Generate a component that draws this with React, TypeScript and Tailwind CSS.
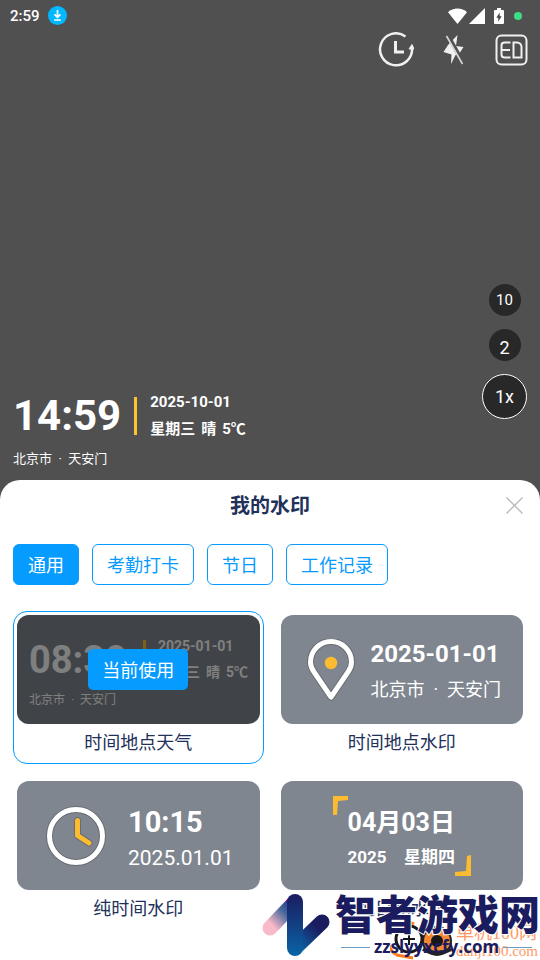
import React from 'react';
import clsx from 'clsx';

const tabs = ['通用', '考勤打卡', '节日', '工作记录'];

function StatusBar() {
    return (
        <div className="flex h-[31px] items-center px-[10px] text-white">
            <span className="text-[15px] leading-5 font-medium">2:59</span>
            <svg className="ml-2 h-[19px] w-[19px]" viewBox="0 0 19 19">
                <circle cx="9.5" cy="9.5" r="9.5" fill="#00b8ff" />
                <path d="M9.5 4v7M6.5 8.3l3 3 3-3M6.2 14h6.6" fill="none" stroke="#fff" strokeWidth="1.7" />
            </svg>
            <svg className="ml-auto h-4 w-[19px]" viewBox="0 0 19 16">
                <path d="M9.5 16 0 4.2C2.5 1.8 6 .5 9.5 .5S16.5 1.8 19 4.2z" fill="#fff" />
            </svg>
            <svg className="ml-[2px] h-4 w-4" viewBox="0 0 16 16">
                <path d="M16 0v16H0z" fill="#fff" />
            </svg>
            <svg className="ml-[9px] h-4 w-[10px]" viewBox="0 0 10 16">
                <path d="M3 0h4v2h2a1 1 0 0 1 1 1v12a1 1 0 0 1-1 1H1a1 1 0 0 1-1-1V3a1 1 0 0 1 1-1h2z" fill="#fff" />
                <path d="M5.7 4.5v3.8h2L4.3 13.5V9.7h-2z" fill="#444" />
            </svg>
            <span className="mr-2 ml-[10px] h-2 w-2 rounded-full bg-[#3ddc84]" />
        </div>
    );
}

function Toolbar() {
    return (
        <div className="flex h-[37px] items-center justify-end gap-7 px-3">
            <button aria-label="定时">
                <svg className="h-9 w-9" viewBox="0 0 36 36" fill="none" stroke="#f0f0f0" strokeWidth="2.5">
                    <path d="M27.5 4.4A16 16 0 1 0 34 16" />
                    <path d="M17.500 9v11h8.500" strokeWidth="3" />
                    <path d="m31 17 3-4.500 2 4.500z" fill="#f0f0f0" strokeWidth="1" />
                </svg>
            </button>
            <button aria-label="闪光灯">
                <svg className="h-9 w-[25px]" viewBox="0 0 25 36">
                    <path d="M15.5 3 14 14l7.500 1L17 22l-3.500 1L9 32l.500-9.500-8-2.500L6 13z" fill="#f0f0f0" />
                    <path d="M6 3.500 22 32" stroke="#505050" strokeWidth="4" />
                    <path d="M4.500 4 20.500 32" stroke="#d8d8d8" strokeWidth="1.6" />
                </svg>
            </button>
            <button aria-label="画质">
                <svg className="h-9 w-[33px]" viewBox="0 0 33 36" fill="none" stroke="#f0f0f0" strokeWidth="2">
                    <rect x="1.5" y="3.5" width="30" height="29" rx="5" />
                    <path d="M15.500 10.5H9.5a3 3 0 0 0-3 3v9a3 3 0 0 0 3 3h6M6.5 18H15" />
                    <path d="M18.5 25.5v-15H22a4.500 4.500 0 0 1 4.500 4.500v10.500z" />
                </svg>
            </button>
        </div>
    );
}

function CameraView() {
    return (
        <main className="flex flex-1 items-end justify-between px-[13px] text-white">
            <div className="pb-[11px]">
                <div className="flex items-center">
                    <span className="text-[42px] leading-[54px] font-bold">14:59</span>
                    <span className="ml-[13px] h-[38px] w-[3px] bg-[#ffc32b]" />
                    <div className="ml-[13px] text-[15px] leading-[27px] font-bold">
                        <p>2025-10-01</p>
                        <p className="flex gap-[6px]">
                            <span>星期三</span>
                            <span>晴</span>
                            <span>5℃</span>
                        </p>
                    </div>
                </div>
                <p className="mt-[6px] text-[13px] leading-5 whitespace-pre">北京市  ·  天安门</p>
            </div>
            <div className="flex flex-col items-center gap-[13px] pb-[61px]">
                <button className="h-8 w-8 rounded-full bg-[#282828] text-[15px]">10</button>
                <button className="h-8 w-8 rounded-full bg-[#282828] pt-1 text-[18px]">2</button>
                <button className="h-[45px] w-[45px] rounded-full border border-white bg-[#282828] text-[18px]">1x</button>
            </div>
        </main>
    );
}

interface CardProps {
    label: string;
    active?: boolean;
    children: React.ReactNode;
}

function TemplateCard({ label, active, children }: CardProps) {
    return (
        <button
            className={clsx(
                'flex flex-col rounded-[14px] border px-[3px] pt-[3px] pb-px',
                active ? 'border-[#069bff]' : 'border-transparent'
            )}
        >
            <div className="relative flex h-[109px] w-full items-center overflow-hidden rounded-xl bg-[#80868f] text-left text-white">
                {children}
                {active && (
                    <div className="absolute inset-0 flex items-center justify-center bg-black/50">
                        <span className="rounded-[5px] bg-[#069bff] px-[14px] pt-[2px] text-[18px] leading-[39px]">当前使用</span>
                    </div>
                )}
            </div>
            <span className="w-full text-center text-[18px] leading-[38px] text-[#22315a]">{label}</span>
        </button>
    );
}

function BrandMark() {
    return (
        <div className="pointer-events-none absolute right-0 bottom-0 flex h-[70px] w-[280px] items-start">
            <svg className="h-[70px] w-[72px] shrink-0" viewBox="0 0 72 70">
                <defs>
                    <linearGradient id="armLeft" x1="0" y1="1" x2="1" y2="0">
                        <stop offset="0.1" stopColor="#f8b9c9" />
                        <stop offset="0.6" stopColor="#49699a" />
                        <stop offset="0.850" stopColor="#2c4a90" />
                        <stop offset="0.900" stopColor="#a0007c" />
                    </linearGradient>
                    <linearGradient id="armRight" x1="0" y1="1" x2="1" y2="0">
                        <stop offset="0" stopColor="#0b65a6" />
                        <stop offset="0.8" stopColor="#1b1c60" />
                    </linearGradient>
                    <linearGradient id="stem" x1="0" y1="0" x2="0" y2="1">
                        <stop offset="0" stopColor="#1b1c60" />
                        <stop offset="1" stopColor="#0964a6" />
                    </linearGradient>
                </defs>
                <path d="M10 38 34 13" stroke="url(#armLeft)" strokeWidth="15" strokeLinecap="round" />
                <path d="M36 57 62 32" stroke="url(#armRight)" strokeWidth="15" strokeLinecap="round" />
                <rect x="27" y="4" width="16" height="62" rx="8" fill="url(#stem)" />
            </svg>
            <div className="relative ml-[3px] flex-1 pt-[3px]">
                <div className="absolute top-[31px] right-[2px] flex items-center gap-1 text-[#ff9a66]">
                    <svg className="h-10 w-[62px]" viewBox="0 0 62 40" fill="none">
                        <path d="M24 3A16 16 0 0 0 7 34l16 3" stroke="#ff7a1a" strokeWidth="3" />
                        <circle cx="19" cy="18" r="13" stroke="#171717" strokeWidth="3" />
                        <path d="M19 12v12M13 18h12" stroke="#171717" strokeWidth="2" />
                        <circle cx="47" cy="20" r="14" fill="#f58634" stroke="#222" strokeWidth="2" />
                        <circle cx="47" cy="20" r="6" fill="#171717" />
                        <path d="M33 28q14 8 28 0" stroke="#222" strokeWidth="4" />
                    </svg>
                    <div className="font-['Liberation_Serif','Noto_Sans_CJK_SC',serif] whitespace-nowrap">
                        <p className="text-[18px] leading-5">单机100网</p>
                        <p className="text-[15px] leading-4">danji100.com</p>
                    </div>
                </div>
                <p className="relative text-[41px] leading-[46px] font-black whitespace-nowrap text-[#1b1c60] [paint-order:stroke] [-webkit-text-stroke:2px_#fff]">
                    智者游戏网
                </p>
                <div className="relative flex items-center gap-1 pr-2 pl-[6px]">
                    <span className="h-px flex-1 bg-[#6b9cc4]" />
                    <span className="font-['Open_Sans',sans-serif] text-[17px] leading-4 font-bold text-[#1b1c60]">zzslyyxcfy.com</span>
                    <span className="h-px flex-1 bg-[#6b9cc4]" />
                </div>
            </div>
        </div>
    );
}

export default function App() {
    return (
        <div className="flex min-h-screen flex-col bg-[#505050] font-['Roboto','Noto_Sans_CJK_SC',sans-serif]" lang="zh-CN">
            <StatusBar />
            <Toolbar />
            <CameraView />

            <section className="relative rounded-t-[20px] bg-white pb-[30px]">
                <header className="relative flex h-[51px] items-center justify-center">
                    <h1 className="text-[20px] leading-7 font-bold text-[#22315a]">我的水印</h1>
                    <button aria-label="关闭" className="absolute right-[17px]">
                        <svg className="h-[17px] w-[17px]" viewBox="0 0 17 17" stroke="#b8b8b8" strokeWidth="1.3">
                            <path d="m.5.5 16 16M16.5.5l-16 16" />
                        </svg>
                    </button>
                </header>

                <nav className="mt-[13px] flex gap-[13px] px-[13px]">
                    {tabs.map((tab, i) => (
                        <button
                            key={tab}
                            className={clsx(
                                'rounded-md border border-[#069bff] px-[14px] pt-[2px] text-[18px] leading-[37px]',
                                i === 0 ? 'bg-[#069bff] text-white' : 'bg-white text-[#069bff]'
                            )}
                        >
                            {tab}
                        </button>
                    ))}
                </nav>

                <div className="mt-[26px] grid grid-cols-2 gap-[13px] px-[13px]">
                    <TemplateCard label="时间地点天气" active>
                        <div className="pt-[2px] pl-3">
                            <div className="flex items-center">
                                <span className="pt-[2px] text-[38px] leading-[52px] font-bold">08:30</span>
                                <span className="ml-4 h-[38px] w-[3px] bg-[#ffc32b]" />
                                <div className="ml-3 text-[14px] leading-[26px] font-bold">
                                    <p>2025-01-01</p>
                                    <p className="flex gap-[6px]">
                                        <span>星期三</span>
                                        <span>晴</span>
                                        <span>5℃</span>
                                    </p>
                                </div>
                            </div>
                            <p className="mt-1 text-[12px] leading-5 whitespace-pre">北京市  ·  天安门</p>
                        </div>
                    </TemplateCard>

                    <TemplateCard label="时间地点水印">
                        <svg className="ml-[26px] h-[62px] w-12" viewBox="0 0 48 62" fill="none">
                            <path d="M24 58 7 33C4.5 29.5 3.5 26 3.5 23a20.5 20.5 0 0 1 41 0c0 3-1 6.5-3.5 10z" stroke="#686d74" strokeWidth="7" strokeLinejoin="round" />
                            <path d="M24 58 7 33C4.5 29.5 3.5 26 3.5 23a20.5 20.5 0 0 1 41 0c0 3-1 6.5-3.5 10z" stroke="#fff" strokeWidth="5" strokeLinejoin="round" />
                            <circle cx="24" cy="24" r="6.2" fill="#fdbc2f" />
                        </svg>
                        <div className="ml-4 pt-1 whitespace-pre">
                            <p className="text-[24px] leading-9 font-bold">2025-01-01</p>
                            <p className="text-[18px] leading-9">北京市  ·  天安门</p>
                        </div>
                    </TemplateCard>

                    <TemplateCard label="纯时间水印">
                        <svg className="ml-[29px] h-[60px] w-[60px]" viewBox="0 0 60 60" fill="none">
                            <circle cx="30" cy="30" r="26.5" stroke="#686d74" strokeWidth="7" />
                            <circle cx="30" cy="30" r="26.5" stroke="#fff" strokeWidth="5" />
                            <path d="M31.5 14.5V29.5L43 37" stroke="#686d74" strokeWidth="7" strokeLinecap="round" strokeLinejoin="round" />
                            <path d="M31.5 14.5V29.5L43 37" stroke="#fdbc2f" strokeWidth="5" strokeLinecap="round" strokeLinejoin="round" />
                        </svg>
                        <div className="ml-[22px] pt-2">
                            <p className="text-[29px] leading-9 font-bold">10:15</p>
                            <p className="text-[21px] leading-9">2025.01.01</p>
                        </div>
                    </TemplateCard>

                    <TemplateCard label="纯日期水印">
                        <div className="mx-auto flex h-20">
                            <svg className="h-5 w-[15px]" viewBox="0 0 15 20">
                                <path d="M0 0h15v4L5 5 4 19H0z" fill="#fdbc2f" />
                            </svg>
                            <div className="self-center pt-2 font-bold">
                                <p className="text-[25px] leading-[35px]">04月03日</p>
                                <p className="flex justify-between text-[17px] leading-[35px]">
                                    <span>2025</span>
                                    <span>星期四</span>
                                </p>
                            </div>
                            <svg className="h-[21px] w-4 self-end" viewBox="0 0 16 21">
                                <path d="M16 21H0v-4l11-1 1-15 4-1z" fill="#fdbc2f" />
                            </svg>
                        </div>
                    </TemplateCard>
                </div>

                <BrandMark />
            </section>
        </div>
    );
}
